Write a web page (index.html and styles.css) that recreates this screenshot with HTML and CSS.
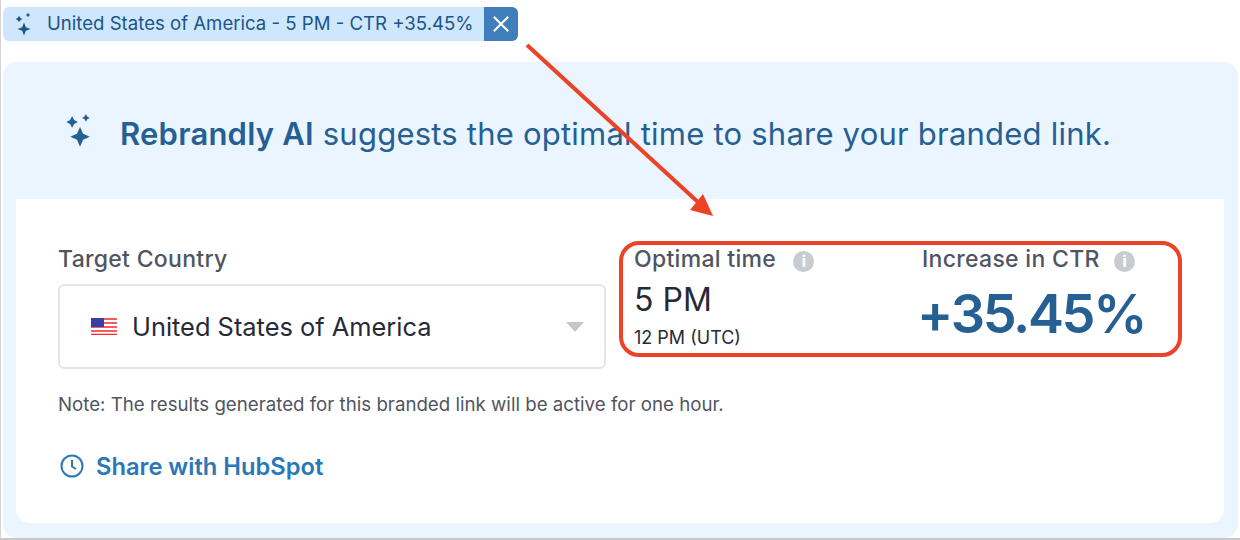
FILE: index.html
```html
<!DOCTYPE html>
<html lang="en">

<head>
  <meta charset="UTF-8">
  <title>Rebrandly AI</title>
  <link rel="stylesheet" href="styles.css">
</head>

<body>
  <div class="tag">
    <svg class="tag-icon" viewBox="0 0 24 28.800">
      <path d="M10.800 12.600l2.200 5.600 5.600 2.200-5.600 2.200-2.200 5.600-2.200-5.600-5.600-2.200 5.600-2.200z" />
      <path d="M4.800 4.400l1.400 2.600 2.600 1.400-2.600 1.400-1.400 2.600-1.400-2.600-2.600-1.400 2.600-1.400z" />
      <path d="M15.600.6l1 2 2 1-2 1-1 2-1-2-2-1 2-1z" />
    </svg>
    <span class="tag-label">United States of America - 5 PM - CTR +35.45%</span>
    <button class="tag-close">
      <svg viewBox="0 0 20 20">
        <path d="M2 2l16 16M18 2L2 18" />
      </svg>
    </button>
  </div>

  <div class="panel">
    <div class="panel-head">
      <svg class="head-icon" viewBox="0 0 30 37">
        <path d="M15.600 14.600l3.400 7.600 7.600 3.400-7.600 3.400-3.400 7.600-3.400-7.600-7.600-3.400 7.600-3.400z" />
        <path d="M6.700 2.400l2.300 4.200 4.200 2.300-4.200 2.300-2.300 4.200-2.300-4.200-4.200-2.300 4.200-2.300z" />
        <path d="M22.200 0l1.500 2.900 2.900 1.500-2.900 1.500-1.500 2.900-1.500-2.900-2.900-1.500 2.900-1.500z" />
      </svg>
      <h1><strong>Rebrandly AI</strong> suggests the optimal time to share your branded link.</h1>
    </div>

    <div class="card">
      <div class="columns">
        <div class="country">
          <div class="field-label">Target Country</div>
          <div class="select">
            <svg class="flag" viewBox="0 0 26 17">
              <rect width="26" height="17" fill="#fff" />
              <path d="M0 1h26M0 5h26M0 9h26M0 13h26M0 16.500h26" stroke="#f0282d" stroke-width="1.400" />
              <rect width="13" height="9" fill="#3a3fa8" />
            </svg>
            <span class="select-value">United States of America</span>
            <span class="caret"></span>
          </div>
        </div>

        <div class="highlight">
          <div class="stat stat-time">
            <div class="field-label">Optimal time <span class="info">i</span></div>
            <div class="time">5 PM</div>
            <div class="utc">12 PM (UTC)</div>
          </div>
          <div class="stat stat-ctr">
            <div class="field-label">Increase in CTR <span class="info">i</span></div>
            <div class="ctr">+35.45%</div>
          </div>
        </div>
      </div>

      <p class="note">Note: The results generated for this branded link will be active for one hour.</p>

      <a class="share" href="#">
        <svg viewBox="0 0 24 24">
          <circle cx="12" cy="12" r="10.500" />
          <path d="M12 6v6.500l4 2.500" />
        </svg>
        Share with HubSpot
      </a>
    </div>
  </div>

  <!-- arrow drawn on top of the screenshot -->
  <svg class="arrow" viewBox="0 0 1240 540">
    <path d="M527 45L699 203" />
    <polygon points="713,216 690,210 703,194" />
  </svg>
</body>

</html>
```

FILE: styles.css
```css
* {
  box-sizing: border-box;
  margin: 0;
  padding: 0;
}

body {
  position: relative;
  width: 1240px;
  height: 540px;
  overflow: hidden;
  padding: 7px 2px 2px 2px;
  background: #fff;
  border-left: 1px solid #d4d4d4;
  border-bottom: 2px solid #c8c8c8;
  font-family: "Inter", sans-serif;
}

.tag {
  display: flex;
  align-items: center;
  width: 515px;
  height: 34px;
  border-radius: 6px;
  overflow: hidden;
  background: #cfe7fd;
  color: #1c5587;
}

.tag-icon {
  width: 20px;
  height: 24px;
  margin-left: 12px;
  fill: #1c5587;
}

.tag-label {
  margin-left: 12px;
  margin-top: -3px;
  font-size: 18.600px;
  white-space: nowrap;
}

.tag-close {
  margin-left: auto;
  width: 34px;
  height: 34px;
  border: none;
  background: #3f7dbb;
  display: flex;
  align-items: center;
  justify-content: center;
}

.tag-close svg {
  width: 18px;
  height: 18px;
  fill: none;
  stroke: #fff;
  stroke-width: 2.400;
}

.panel {
  margin-top: 21px;
  height: 476px;
  padding: 0 14px 15px 13px;
  background: #eaf5ff;
  border-radius: 14px;
  display: flex;
  flex-direction: column;
}

.panel-head {
  height: 137px;
  padding: 52px 0 0 50px;
  display: flex;
  align-items: flex-start;
  color: #265f92;
}

.head-icon {
  width: 27px;
  height: 33px;
  fill: #265f92;
}

.panel-head h1 {
  margin: 1px 0 0 27px;
  font-size: 31px;
  font-weight: 400;
  letter-spacing: 0.220px;
  white-space: nowrap;
}

.panel-head strong {
  font-weight: 600;
}

.card {
  flex: 1;
  padding: 42px 42px 0;
  background: #fff;
  border-radius: 0 0 14px 14px;
}

.columns {
  display: flex;
  justify-content: space-between;
}

.field-label {
  font-size: 23px;
  font-weight: 500;
  letter-spacing: 0.300px;
  color: #50555f;
  white-space: nowrap;
}

.country {
  width: 548px;
  padding-top: 4px;
}

.select {
  display: flex;
  align-items: center;
  height: 85px;
  margin-top: 11px;
  padding: 0 20px 0 31px;
  border: 2px solid #e6e6e6;
  border-radius: 6px;
}

.flag {
  width: 26px;
  height: 17px;
}

.select-value {
  margin-left: 15px;
  font-size: 25.400px;
  color: #262a38;
}

.caret {
  margin-left: auto;
  border-left: 9px solid transparent;
  border-right: 9px solid transparent;
  border-top: 10px solid #c4c8cc;
}

.highlight {
  display: flex;
  width: 563px;
  height: 116px;
  border: 4px solid #ec4226;
  border-radius: 20px;
}

.stat-time {
  width: 299px;
  padding-left: 11px;
}

.stat-time .info {
  margin-left: 11px;
}

.info {
  display: inline-block;
  width: 21px;
  height: 21px;
  margin-left: 8px;
  border-radius: 50%;
  background: #c8cbcf;
  color: #fff;
  font-size: 15px;
  font-weight: 800;
  line-height: 21px;
  letter-spacing: 0;
  text-align: center;
  vertical-align: 0;
}

.time {
  margin-top: 7px;
  font-size: 32px;
  color: #262a38;
}

.utc {
  margin-top: 8px;
  font-size: 18px;
  color: #262a38;
}

.ctr {
  margin: 7px 0 0 -5px;
  font-size: 54px;
  line-height: 68px;
  font-weight: 600;
  letter-spacing: -2.300px;
  color: #265f92;
}

.note {
  margin-top: 24px;
  font-size: 18.700px;
  color: #50555f;
}

.share {
  display: inline-flex;
  align-items: center;
  margin: 36px 0 0 2px;
  font-size: 23.700px;
  font-weight: 600;
  color: #2a78b8;
  text-decoration: none;
}

.share svg {
  width: 24px;
  height: 24px;
  margin-right: 12px;
  margin-top: -2px;
  fill: none;
  stroke: #2a78b8;
  stroke-width: 2;
}

.arrow {
  position: absolute;
  top: 0;
  left: -1px;
  width: 1240px;
  height: 540px;
}

.arrow path {
  fill: none;
  stroke: #ec4226;
  stroke-width: 4;
}

.arrow polygon {
  fill: #ec4226;
}
```
